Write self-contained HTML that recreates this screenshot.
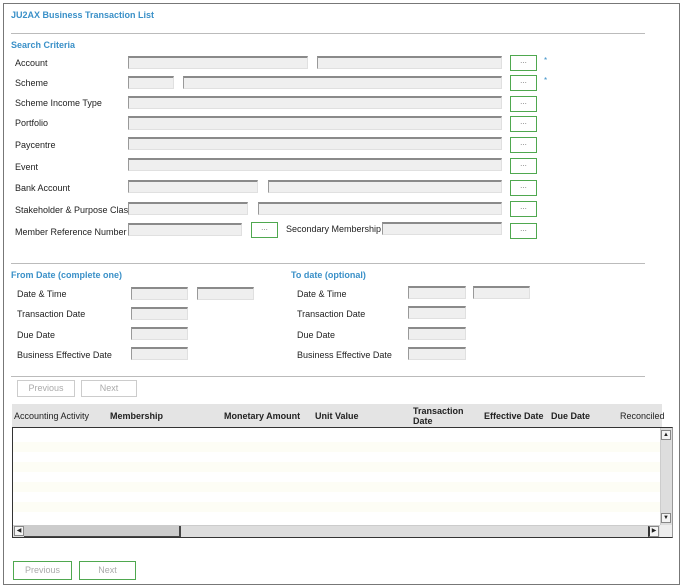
<!DOCTYPE html>
<html><head><style>
*{margin:0;padding:0;box-sizing:border-box}
body{width:684px;height:588px;background:#fff;position:relative;font-family:"Liberation Sans",Arial,sans-serif;font-size:9px;color:#222;overflow:hidden}
div,span{position:absolute}
.frame{left:3px;top:3px;width:677px;height:582px;border:1px solid #777}
.h{color:#3a90c8;font-weight:bold;font-size:9px}
.l{font-size:9px;color:#222}
.i{background:#efefef;border-top:2px solid #8a8a8a;border-left:1px solid #999;border-right:1px solid #e0e0e0;border-bottom:1px solid #e0e0e0}
.b{width:27px;height:16px;border:1px solid #4fa84f;background:#fff;color:#777;font-size:8px;text-align:center;line-height:10px}
.hr{height:1px;background:#bbb}
.pb{border:1px solid #ccc;color:#aaa;text-align:center;font-size:9px;background:#fff}
.gb{border:1px solid #4fa84f;color:#aaa;text-align:center;font-size:9px;background:#fff}
.th{font-size:9px;font-weight:bold;color:#222}
</style></head><body>
<div class="frame"></div>
<div class="h" style="left:11px;top:10px">JU2AX Business Transaction List</div>
<div class="hr" style="left:11px;top:33px;width:634px"></div>
<div class="h" style="left:11px;top:40px">Search Criteria</div>

<div class="l" style="left:15px;top:58px">Account</div>
<div class="l" style="left:15px;top:78px">Scheme</div>
<div class="l" style="left:15px;top:98px">Scheme Income Type</div>
<div class="l" style="left:15px;top:118px">Portfolio</div>
<div class="l" style="left:15px;top:140px">Paycentre</div>
<div class="l" style="left:15px;top:162px">Event</div>
<div class="l" style="left:15px;top:183px">Bank Account</div>
<div class="l" style="left:15px;top:205px">Stakeholder &amp; Purpose Class</div>
<div class="l" style="left:15px;top:227px">Member Reference Number</div>
<div class="l" style="left:286px;top:224px">Secondary Membership</div>

<div class="i" style="left:128px;top:56px;width:180px;height:13px"></div>
<div class="i" style="left:317px;top:56px;width:185px;height:13px"></div>
<div class="i" style="left:128px;top:76px;width:46px;height:13px"></div>
<div class="i" style="left:183px;top:76px;width:319px;height:13px"></div>
<div class="i" style="left:128px;top:96px;width:374px;height:13px"></div>
<div class="i" style="left:128px;top:116px;width:374px;height:14px"></div>
<div class="i" style="left:128px;top:137px;width:374px;height:13px"></div>
<div class="i" style="left:128px;top:158px;width:374px;height:13px"></div>
<div class="i" style="left:128px;top:180px;width:130px;height:13px"></div>
<div class="i" style="left:268px;top:180px;width:234px;height:13px"></div>
<div class="i" style="left:128px;top:202px;width:120px;height:13px"></div>
<div class="i" style="left:258px;top:202px;width:244px;height:13px"></div>
<div class="i" style="left:128px;top:223px;width:114px;height:13px"></div>
<div class="i" style="left:382px;top:222px;width:120px;height:13px"></div>

<div class="b" style="left:510px;top:55px">...</div>
<div class="b" style="left:510px;top:75px">...</div>
<div class="b" style="left:510px;top:96px">...</div>
<div class="b" style="left:510px;top:116px">...</div>
<div class="b" style="left:510px;top:137px">...</div>
<div class="b" style="left:510px;top:158px">...</div>
<div class="b" style="left:510px;top:180px">...</div>
<div class="b" style="left:510px;top:201px">...</div>
<div class="b" style="left:510px;top:223px">...</div>
<div class="b" style="left:251px;top:222px">...</div>
<div style="left:544px;top:56px;color:#3a90c8;font-size:8px">*</div>
<div style="left:544px;top:76px;color:#3a90c8;font-size:8px">*</div>

<div class="hr" style="left:11px;top:263px;width:634px"></div>
<div class="h" style="left:11px;top:270px">From Date (complete one)</div>
<div class="h" style="left:291px;top:270px">To date (optional)</div>

<div class="l" style="left:17px;top:289px">Date &amp; Time</div>
<div class="l" style="left:17px;top:309px">Transaction Date</div>
<div class="l" style="left:17px;top:330px">Due Date</div>
<div class="l" style="left:17px;top:350px">Business Effective Date</div>
<div class="l" style="left:297px;top:289px">Date &amp; Time</div>
<div class="l" style="left:297px;top:309px">Transaction Date</div>
<div class="l" style="left:297px;top:330px">Due Date</div>
<div class="l" style="left:297px;top:350px">Business Effective Date</div>

<div class="i" style="left:131px;top:287px;width:57px;height:13px"></div>
<div class="i" style="left:197px;top:287px;width:57px;height:13px"></div>
<div class="i" style="left:131px;top:307px;width:57px;height:13px"></div>
<div class="i" style="left:131px;top:327px;width:57px;height:13px"></div>
<div class="i" style="left:131px;top:347px;width:57px;height:13px"></div>
<div class="i" style="left:408px;top:286px;width:58px;height:13px"></div>
<div class="i" style="left:473px;top:286px;width:57px;height:13px"></div>
<div class="i" style="left:408px;top:306px;width:58px;height:13px"></div>
<div class="i" style="left:408px;top:327px;width:58px;height:13px"></div>
<div class="i" style="left:408px;top:347px;width:58px;height:13px"></div>

<div class="hr" style="left:11px;top:376px;width:634px"></div>
<div class="pb" style="left:17px;top:380px;width:58px;height:17px;line-height:15px">Previous</div>
<div class="pb" style="left:81px;top:380px;width:56px;height:17px;line-height:15px">Next</div>

<div style="left:12px;top:404px;width:650px;height:23px;background:#e4e4e4"></div>
<div class="l" style="left:14px;top:411px">Accounting Activity</div>
<div class="th" style="left:110px;top:411px">Membership</div>
<div class="th" style="left:224px;top:411px">Monetary Amount</div>
<div class="th" style="left:315px;top:411px">Unit Value</div>
<div class="th" style="left:413px;top:406px;line-height:10px">Transaction<br>Date</div>
<div class="th" style="left:484px;top:411px">Effective Date</div>
<div class="th" style="left:551px;top:411px">Due Date</div>
<div class="l" style="left:620px;top:411px">Reconciled</div>

<div style="left:12px;top:427px;width:661px;height:111px;border:1px solid #333;border-right-color:#999;background:#fff"></div>
<div style="left:13px;top:442px;width:647px;height:10px;background:#fdfdf5"></div>
<div style="left:13px;top:462px;width:647px;height:10px;background:#fdfdf5"></div>
<div style="left:13px;top:482px;width:647px;height:10px;background:#fdfdf5"></div>
<div style="left:13px;top:502px;width:647px;height:10px;background:#fdfdf5"></div>
<div style="left:660px;top:428px;width:12px;height:97px;background:#ddd;border-left:1px solid #ccc"></div>
<div style="left:661px;top:430px;width:10px;height:10px;background:#f4f4f4;border:1px solid #888;font-size:6px;text-align:center;line-height:8px">▲</div>
<div style="left:661px;top:513px;width:10px;height:10px;background:#f4f4f4;border:1px solid #888;font-size:6px;text-align:center;line-height:8px">▼</div>
<div style="left:13px;top:525px;width:647px;height:12px;background:#ddd;border-top:1px solid #ccc"></div>
<div style="left:14px;top:526px;width:10px;height:10px;background:#f4f4f4;border:1px solid #888;font-size:6px;text-align:center;line-height:8px">◀</div>
<div style="left:24px;top:526px;width:157px;height:11px;background:#ccc;border-right:2px solid #444;border-bottom:1px solid #444"></div>
<div style="left:648px;top:526px;width:11px;height:11px;background:#f4f4f4;border:1px solid #888;border-left:2px solid #333;font-size:6px;text-align:center;line-height:8px">▶</div>
<div style="left:660px;top:525px;width:12px;height:12px;background:#eee"></div>

<div class="gb" style="left:13px;top:561px;width:59px;height:19px;line-height:17px">Previous</div>
<div class="gb" style="left:79px;top:561px;width:57px;height:19px;line-height:17px">Next</div>
</body></html>
